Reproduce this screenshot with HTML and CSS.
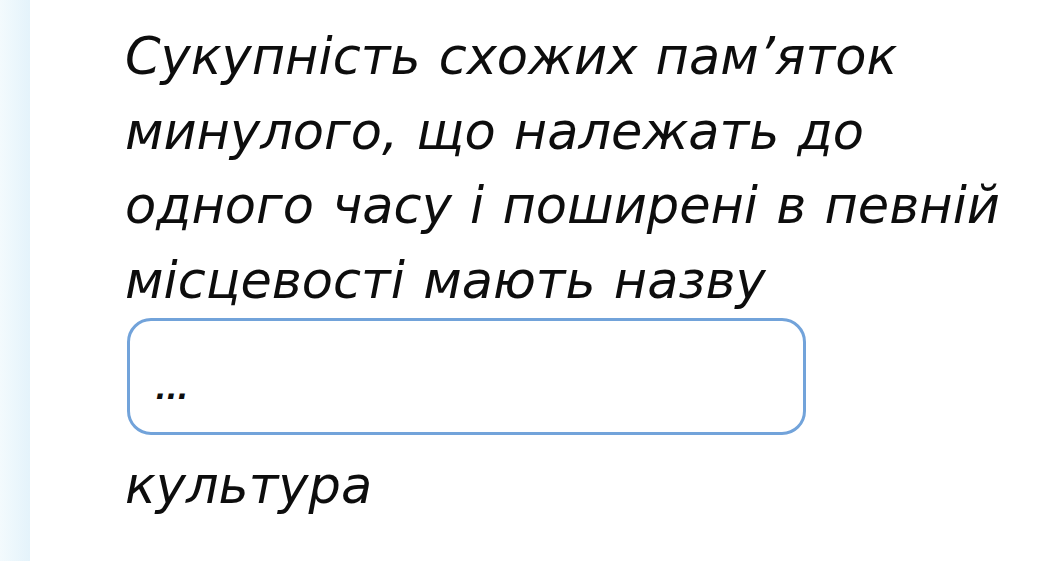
FILE: index.html
```html
<!DOCTYPE html>
<html lang="uk">
<head>
<meta charset="utf-8">
<link rel="stylesheet" href="styles.css">
</head>
<body>
<div class="page">
  <div class="strip"></div>
  <main class="card">
    <p class="question">Сукупність схожих пам’яток<br>минулого, що належать до<br>одного часу і поширені в певній<br>місцевості мають назву</p>
    <div class="answer-box"><span class="placeholder">...</span></div>
    <p class="answer">культура</p>
  </main>
</div>
</body>
</html>
```
FILE: styles.css
```css
html, body {
  margin: 0;
  padding: 0;
  background: #ffffff;
}
.page {
  display: flex;
  width: 1060px;
  height: 561px;
  overflow: hidden;
}
.strip {
  width: 30px;
  flex: none;
  background: linear-gradient(to right, #f3fafd, #e4f3fb);
}
.card {
  flex: 1;
  padding: 20px 0 0 95px;
  font-family: "DejaVu Sans", sans-serif;
  font-style: italic;
  color: #0d0d0d;
}
.question {
  margin: 0;
  font-size: 51px;
  line-height: 74.5px;
  word-spacing: 2px;
  white-space: nowrap;
}
.answer-box {
  box-sizing: border-box;
  width: 679px;
  height: 117px;
  margin-left: 2px;
  border: 3px solid #72a3da;
  border-radius: 24px;
  padding: 48px 0 0 26px;
}
.placeholder {
  font-family: "Liberation Sans", sans-serif;
  font-style: italic;
  font-weight: bold;
  font-size: 36px;
  line-height: 36px;
  letter-spacing: 1px;
}
.answer {
  margin: 14px 0 0;
  font-size: 51px;
  line-height: 74.5px;
}
```
